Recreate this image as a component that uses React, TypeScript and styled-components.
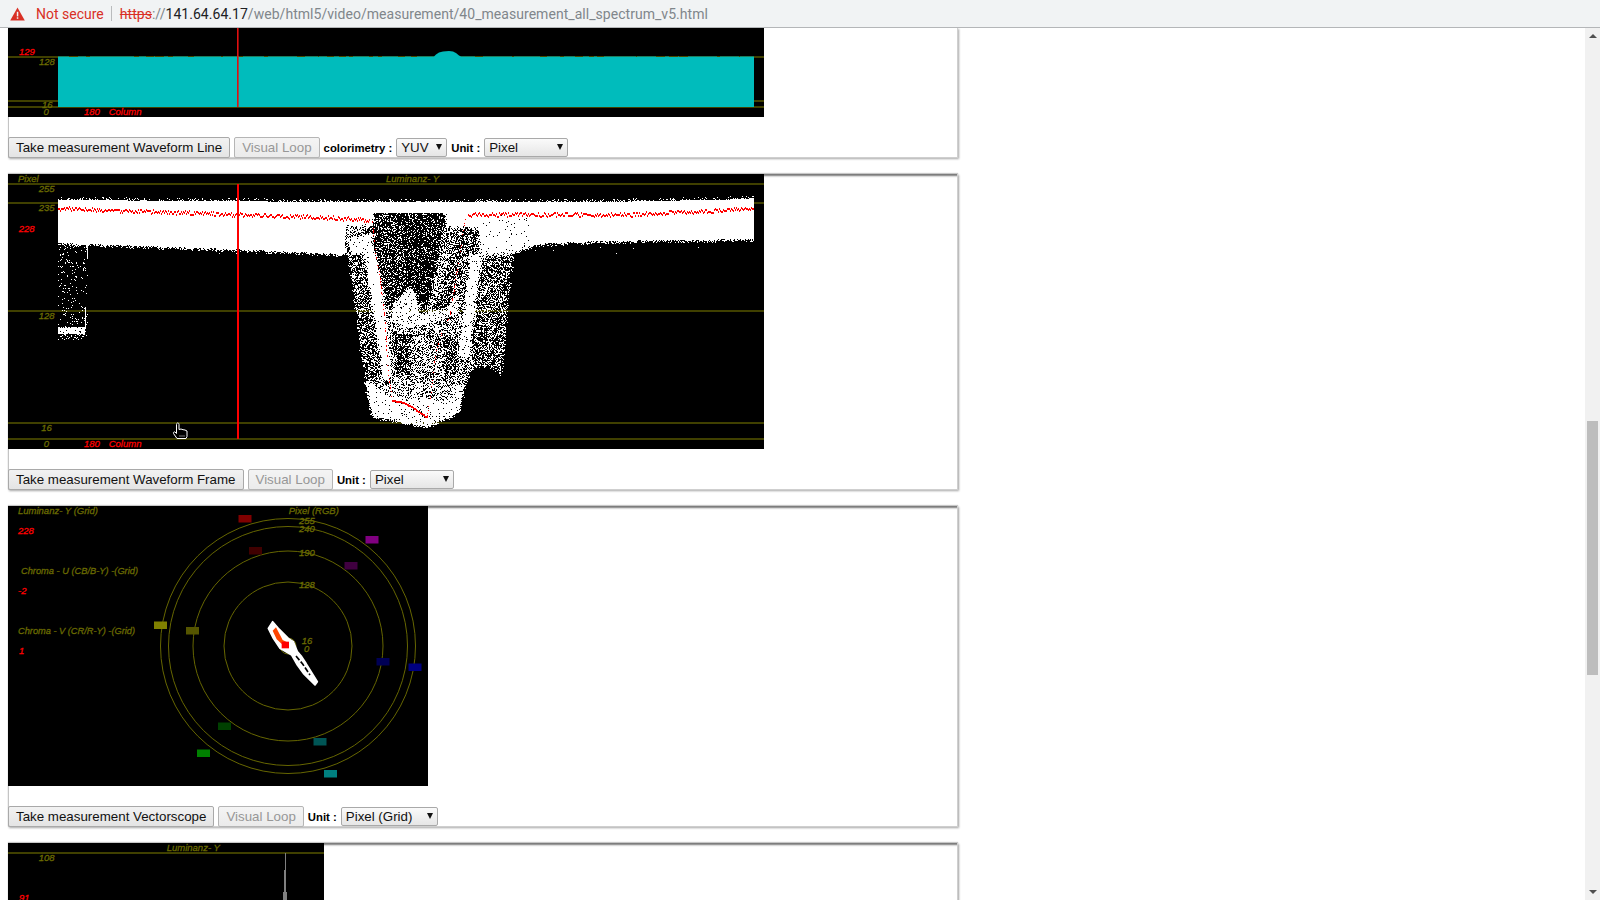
import React from 'react'
import styled, { createGlobalStyle } from 'styled-components'

type Pt = [number, number]
type Region = { d: number; pts: Pt[] }

function makeRandom(seed: number) {
  let s = seed
  return () => {
    s = (s * 1664525 + 1013904223) % 4294967296
    return s / 4294967296
  }
}

function lerp(stops: Pt[], x: number) {
  for (let i = 1; i < stops.length; i++) {
    if (x <= stops[i][0]) {
      const [x0, y0] = stops[i - 1]
      const [x1, y1] = stops[i]
      return y0 + ((y1 - y0) * (x - x0)) / (x1 - x0)
    }
  }
  return stops[stops.length - 1][1]
}

function inside(pts: Pt[], x: number, y: number) {
  let hit = false
  for (let i = 0, j = pts.length - 1; i < pts.length; j = i++) {
    const [xi, yi] = pts[i]
    const [xj, yj] = pts[j]
    if (yi > y !== yj > y && x < ((xj - xi) * (y - yi)) / (yj - yi) + xi) hit = !hit
  }
  return hit
}

// regions of the dip, in zoomed coordinates (x = 322 + zx / 3, y = -4 + zy / 3)
const dipRegions: Region[] = [
  { d: 0.45, pts: [[40, 170], [550, 170], [610, 222], [550, 250], [545, 300], [530, 430], [520, 560], [515, 612], [470, 585], [420, 600], [385, 730], [290, 772], [125, 740], [100, 600], [60, 300], [45, 250]] },
  { d: 0.42, pts: [[65, 250], [105, 250], [150, 620], [105, 620]] },
  { d: 0.4, pts: [[450, 260], [545, 258], [520, 560], [515, 612], [470, 585], [420, 570]] },
  { d: 0.62, pts: [[150, 430], [400, 430], [400, 640], [150, 640]] },
  { d: 0.28, pts: [[185, 490], [240, 490], [235, 610], [195, 600]] },
  { d: 0.34, pts: [[340, 500], [385, 500], [380, 610], [345, 610]] },
  { d: 0.17, pts: [[125, 125], [385, 125], [345, 175], [440, 178], [425, 270], [395, 370], [370, 420], [280, 415], [250, 360], [215, 375], [165, 415], [150, 340], [130, 240]] },
  { d: 0.28, pts: [[130, 140], [215, 140], [230, 330], [165, 400]] },
  { d: 0.42, pts: [[345, 178], [435, 178], [400, 380], [365, 400], [320, 390]] },
  { d: 0.62, pts: [[340, 175], [365, 175], [345, 300], [310, 420], [290, 420]] },
  { d: 1, pts: [[0, 110], [130, 110], [130, 165], [45, 165], [45, 250], [0, 250]] },
  { d: 0.55, pts: [[45, 165], [125, 165], [125, 205], [50, 210]] },
  { d: 0.95, pts: [[50, 205], [125, 190], [130, 250], [60, 250]] },
  { d: 1, pts: [[345, 110], [445, 110], [445, 172], [345, 172]] },
  { d: 0.97, pts: [[440, 110], [620, 110], [620, 225], [550, 250], [450, 255]] },
  { d: 0.98, pts: [[100, 245], [136, 245], [156, 340], [176, 520], [181, 630], [160, 630], [130, 440]] },
  { d: 0.9, pts: [[190, 395], [215, 375], [235, 345], [252, 365], [270, 430], [350, 415], [365, 385], [385, 370], [380, 425], [300, 460], [220, 470], [180, 450]] },
  { d: 0.95, pts: [[420, 250], [455, 250], [436, 400], [416, 560], [380, 560], [400, 420]] },
  { d: 0.95, pts: [[105, 640], [400, 640], [385, 730], [290, 772], [125, 740]] },
  { d: 0.72, pts: [[130, 640], [380, 640], [360, 690], [170, 680]] },
]

const dipRed: Pt[] = [[125, 150], [135, 240], [150, 330], [165, 460], [172, 590], [185, 690], [220, 695], [250, 712], [290, 740], [300, 680], [310, 590], [325, 510], [360, 430], [385, 270], [405, 140]]

function buildFrameTrace() {
  const rnd = makeRandom(41)
  const topAt: Pt[] = [[50, 26], [330, 28], [600, 28], [746, 25]]
  const bottomAt: Pt[] = [[50, 68], [222, 74], [337, 79], [525, 69], [590, 66], [746, 64]]
  const rows: boolean[][] = Array.from({ length: 275 }, () => new Array(756).fill(false))
  const set = (x: number, y: number) => {
    if (y >= 0 && y < 275 && x >= 0 && x < 756) rows[y][x] = true
  }

  // main band
  for (let x = 50; x < 746; x++) {
    const inDip = x >= 337 && x <= 520
    const top = Math.round(lerp(topAt, x))
    const bottom = inDip ? 38 : Math.round(lerp(bottomAt, x))
    for (let y = top; y <= bottom; y++) set(x, y)
    for (let k = 1; k < 4; k++) {
      if (rnd() < 0.35 / k) set(x, top - k)
      if (!inDip && rnd() < 0.7 / k) set(x, bottom + k)
    }
    if (!inDip && rnd() < 0.4) set(x, bottom - Math.floor(rnd() * 3))
  }

  // the dip, region edges get dithered by jittering the tested point
  for (let y = 34; y < 264; y++) {
    for (let x = 322; x < 545; x++) {
      const zx = (x - 322) * 3 + (rnd() - 0.5) * 10
      const zy = (y + 4) * 3 + (rnd() - 0.5) * 10
      let d = 0
      for (const r of dipRegions) {
        if (inside(r.pts, zx, zy)) d = r.d
      }
      if (d > 0 && rnd() < d) set(x, y)
    }
  }

  // left stub
  for (let y = 68; y < 166; y++) {
    for (let x = 50; x < 80; x++) {
      const lump = y >= 153 && y <= 159 && x < 77
      if (rnd() < (lump ? 0.9 : y > 159 ? 0.18 : 0.07)) set(x, y)
    }
  }
  for (let y = 70; y < 85; y++) set(79, y)
  for (let y = 133; y < 155; y++) set(77, y)

  // loose points
  for (let i = 0; i < 24; i++) set(120 + Math.floor(rnd() * 600), 72 + Math.floor(rnd() * 8))

  let white = ''
  rows.forEach((row, y) => {
    let x = 0
    while (x < 756) {
      if (!row[x]) {
        x++
        continue
      }
      let end = x
      while (end < 756 && row[end]) end++
      white += `M${x} ${y + 0.5}h${end - x}`
      x = end
    }
  })

  let red = ''
  const redLeft: Pt[] = [[50, 34], [322, 43], [362, 46]]
  for (let x = 50; x < 362; x++) {
    const y = Math.round(lerp(redLeft, x) + (rnd() - 0.5) * 4)
    red += `M${x} ${y}h1v2h-1z`
  }
  const redRight: Pt[] = [[460, 40], [620, 40], [746, 34]]
  for (let x = 460; x < 746; x++) {
    const y = Math.round(lerp(redRight, x) + (rnd() - 0.5) * 4)
    red += `M${x} ${y}h1v2h-1z`
  }
  for (let i = 1; i < dipRed.length; i++) {
    const [ax, ay] = dipRed[i - 1]
    const [bx, by] = dipRed[i]
    const steps = Math.ceil(Math.hypot(bx - ax, by - ay) / 3)
    const flat = i >= 6 && i <= 8
    for (let s = 0; s < steps; s++) {
      if (!flat && rnd() < 0.72) continue
      const x = 322 + (ax + ((bx - ax) * s) / steps) / 3
      const y = -4 + (ay + ((by - ay) * s) / steps) / 3
      red += `M${Math.round(x)} ${Math.round(y)}h1v${flat ? 2 : 1}h-1z`
    }
  }
  return { white, red }
}

function buildLineFringe() {
  const rnd = makeRandom(7)
  let d = ''
  let x = 52
  while (x < 740) {
    const w = 1 + Math.floor(rnd() * 9)
    if (rnd() < 0.45 && !(x > 420 && x < 456)) d += `M${x} 28.5h${w}`
    x += w + Math.floor(rnd() * 10)
  }
  return d
}

const frameTrace = buildFrameTrace()
const lineFringe = buildLineFringe()

const vectorBoxes: { x: number; y: number; color: string }[] = [
  { x: 230.5, y: 9, color: '#800000' },
  { x: 241, y: 41, color: '#400000' },
  { x: 357.5, y: 30, color: '#800080' },
  { x: 336.5, y: 56, color: '#400040' },
  { x: 146, y: 115.5, color: '#808000' },
  { x: 178, y: 121, color: '#555500' },
  { x: 368.5, y: 152, color: '#000055' },
  { x: 400.5, y: 157.5, color: '#000080' },
  { x: 210, y: 216.5, color: '#004000' },
  { x: 189, y: 243.5, color: '#008000' },
  { x: 305.5, y: 232, color: '#005555' },
  { x: 316, y: 264, color: '#008080' },
]

const GlobalStyle = createGlobalStyle`
  html, body {
    margin: 0;
    height: 100%;
    overflow: hidden;
    background: #fff;
  }
`

const Window = styled.div`
  width: 1600px;
  height: 900px;
  display: flex;
  flex-direction: column;
  overflow: hidden;
  font-family: "Liberation Sans", Arial, sans-serif;
`

const AddressBar = styled.header`
  height: 27px;
  flex: none;
  display: flex;
  align-items: center;
  padding-left: 10px;
  background: #f1f3f4;
  border-bottom: 1px solid #b4b6b8;
  font-family: Roboto, "Liberation Sans", sans-serif;
  font-size: 14px;
  white-space: nowrap;
`

const NotSecure = styled.span`
  margin-left: 11px;
  color: #d93025;
`

const Divider = styled.span`
  width: 1px;
  height: 15px;
  margin: 0 8px 0 7px;
  background: #b9bbbd;
`

const Url = styled.span`
  letter-spacing: 0.04px;
`

const UrlPart = styled.span<{ $tone: 'scheme' | 'sep' | 'host' | 'path' }>`
  color: ${p => ({ scheme: '#d93025', sep: '#80868b', host: '#202124', path: '#80868b' }[p.$tone])};
  text-decoration: ${p => (p.$tone === 'scheme' ? 'line-through' : 'none')};
`

const Body = styled.div`
  flex: 1;
  min-height: 0;
  display: flex;
`

const Page = styled.main`
  flex: 1;
  min-width: 0;
  overflow: hidden;
  padding-left: 8px;
`

const Panel = styled.section<{ $cut?: boolean }>`
  width: 950px;
  margin-bottom: 16px;
  background: #fff;
  box-shadow:
    inset 1px 0 0 #c4c4c4,
    inset -1px -1px 0 #cfcfcf,
    1px 1px 2px rgba(0, 0, 0, 0.35)
    ${p => (p.$cut ? '' : ', inset 0 3px 2px -1px #777, 0 -1px 1px rgba(0, 0, 0, 0.2)')};
`

const Scope = styled.svg`
  display: block;
  background: #000;
`

const ScopeText = styled.text<{ $red?: boolean }>`
  font-family: "Liberation Sans", Arial, sans-serif;
  font-size: 9.5px;
  font-style: italic;
  fill: ${p => (p.$red ? '#ff0000' : '#6b6b00')};
  stroke: ${p => (p.$red ? '#ff0000' : '#6b6b00')};
  stroke-width: 0.3px;
`

const GridLines = styled.path`
  fill: none;
  stroke: #808000;
  stroke-width: 1;
`

const Controls = styled.div`
  display: flex;
  align-items: center;
  gap: 4px;
  height: 21px;
  margin-top: 20px;
`

const Button = styled.button`
  height: 21px;
  padding: 0 7px;
  box-sizing: border-box;
  border: 1px solid #a9a9a9;
  border-radius: 2px;
  background: linear-gradient(#f2f2f2, #e4e4e4);
  color: #111;
  font-family: "Liberation Sans", Arial, sans-serif;
  font-size: 13.33px;
  white-space: nowrap;

  &:disabled {
    color: #979797;
    background: linear-gradient(#f4f4f4, #ebebeb);
    border-color: #b5b5b5;
  }
`

const Label = styled.label`
  font-size: 11.33px;
  font-weight: 700;
  color: #000;
  white-space: nowrap;
`

const SelectBox = styled.span`
  position: relative;
  display: block;

  &::after {
    content: '';
    position: absolute;
    top: 6px;
    right: 5px;
    border-style: solid;
    border-width: 6px 3.5px 0 3.5px;
    border-color: #111 transparent transparent transparent;
    pointer-events: none;
  }
`

const Select = styled.select<{ $width: number }>`
  display: block;
  appearance: none;
  width: ${p => p.$width}px;
  height: 19px;
  padding: 0 0 0 4px;
  box-sizing: border-box;
  border: 1px solid #a9a9a9;
  border-radius: 2px;
  background: linear-gradient(#fafafa, #e6e6e6);
  color: #111;
  font-family: "Liberation Sans", Arial, sans-serif;
  font-size: 13.33px;
`

const ScrollTrack = styled.aside`
  width: 15px;
  flex: none;
  position: relative;
  display: flex;
  flex-direction: column;
  align-items: center;
  justify-content: space-between;
  padding: 6px 0;
  box-sizing: border-box;
  background: #f1f1f1;
`

const ScrollThumb = styled.div`
  position: absolute;
  top: 393px;
  left: 2px;
  width: 11px;
  height: 254px;
  background: #bdbdbd;
`

const ScrollArrow = styled.span<{ $down?: boolean }>`
  width: 0;
  height: 0;
  border-style: solid;
  border-width: ${p => (p.$down ? '4px 4px 0 4px' : '0 4px 4px 4px')};
  border-color: ${p => (p.$down ? '#505050 transparent transparent' : 'transparent transparent #505050')};
`

function WarningIcon() {
  return (
    <svg width="15" height="14" viewBox="0 0 15 14">
      <path d="M7.5 0.5 L14.8 13.5 H0.2 Z" fill="#d93025" />
      <rect x="6.8" y="4.8" width="1.5" height="4.6" fill="#f1f3f4" />
      <rect x="6.8" y="10.3" width="1.5" height="1.5" fill="#f1f3f4" />
    </svg>
  )
}

function HandCursor() {
  return (
    <g transform="translate(165 249)" fill="#000" stroke="#fff" strokeWidth="1">
      <path d="M3.5 1.5 C3.5 -0.5 6 -0.5 6 1.5 V6.5 L8 6 L10 6.7 L12 7 L14 8 V13.5 L13 15.5 H4 L0.5 10.5 C0 9.5 1 8.5 2 9 L3.5 10.5 Z" />
      <path d="M7 12v2M9 12v2M11 12v2" stroke="#777" />
    </g>
  )
}

function LineScope() {
  return (
    <Scope width="756" height="89" viewBox="0 0 756 89">
      <GridLines d="M0 29H756M0 73H756M0 79H756" />
      <path
        d="M50 28.5H426L428 26.5L431 24.5L435 23.5L441 23L445 23.5L448 25L451 27.5L453 28.5H746V79H50Z"
        fill="#00bcbc"
      />
      <path d={lineFringe} stroke="#4b4a00" strokeWidth="1" shapeRendering="crispEdges" />
      <rect x="229" y="0" width="1.6" height="79" fill="#e01010" />
      <ScopeText $red x="11" y="26.5">129</ScopeText>
      <ScopeText x="31" y="36.5">128</ScopeText>
      <ScopeText x="34" y="80">16</ScopeText>
      <ScopeText x="35.5" y="86.5">0</ScopeText>
      <ScopeText $red x="76" y="86.5">180</ScopeText>
      <ScopeText $red x="100.7" y="86.5">Column</ScopeText>
    </Scope>
  )
}

function FrameScope() {
  return (
    <Scope width="756" height="275" viewBox="0 0 756 275">
      <GridLines d="M0 10H756M0 29H756M0 137H756M0 249H756M0 265H756" />
      <path d={frameTrace.white} stroke="#fff" strokeWidth="1" shapeRendering="crispEdges" />
      <path d={frameTrace.red} fill="#ff0000" shapeRendering="crispEdges" />
      <rect x="229" y="10" width="2" height="255" fill="#ff0000" />
      <HandCursor />
      <ScopeText x="10" y="8.2">Pixel</ScopeText>
      <ScopeText x="378" y="8.2">Luminanz- Y</ScopeText>
      <ScopeText x="30.7" y="18.2">255</ScopeText>
      <ScopeText x="30.7" y="37.2">235</ScopeText>
      <ScopeText $red x="10.7" y="58.2">228</ScopeText>
      <ScopeText x="30.7" y="145.2">128</ScopeText>
      <ScopeText x="33.3" y="257">16</ScopeText>
      <ScopeText x="35.7" y="273.2">0</ScopeText>
      <ScopeText $red x="76" y="273.2">180</ScopeText>
      <ScopeText $red x="100.7" y="273.2">Column</ScopeText>
    </Scope>
  )
}

function VectorScope() {
  return (
    <Scope width="420" height="280" viewBox="0 0 420 280">
      <g fill="none" stroke="#666600" strokeWidth="1">
        <circle cx="280" cy="140" r="127.5" />
        <circle cx="280" cy="140" r="119.5" />
        <circle cx="280" cy="140" r="95" />
        <circle cx="280" cy="140" r="64" />
        <circle cx="280" cy="140" r="8" />
      </g>
      {vectorBoxes.map(box => (
        <rect key={box.x} x={box.x} y={box.y} width="13" height="7.5" fill={box.color} />
      ))}
      <g transform="translate(252 104) scale(0.3333)">
        <path
          d="M25 55L38 35L55 55L85 85L100 95L112 125L125 140L138 160L172 215L165 225L130 190L112 165L95 135L60 115L40 85Z"
          fill="#fff"
          stroke="#fff"
          strokeWidth="5"
          strokeLinejoin="round"
        />
        <path d="M108 138L128 162L150 195" fill="none" stroke="#000" strokeWidth="5" strokeDasharray="16 6" />
        <path d="M38 62L48 52L68 90L80 96L72 108L50 88Z" fill="#ff4500" />
        <rect x="65" y="95" width="22" height="20" fill="#ff0000" />
      </g>
      <ScopeText x="10" y="8.2">Luminanz- Y (Grid)</ScopeText>
      <ScopeText x="280.7" y="8.2">Pixel (RGB)</ScopeText>
      <ScopeText $red x="10" y="28.2">228</ScopeText>
      <ScopeText x="13" y="68.2" textLength={117} lengthAdjust="spacingAndGlyphs">Chroma - U (CB/B-Y) -(Grid)</ScopeText>
      <ScopeText $red x="10" y="88.2">-2</ScopeText>
      <ScopeText x="10" y="128.2" textLength={117} lengthAdjust="spacingAndGlyphs">Chroma - V (CR/R-Y) -(Grid)</ScopeText>
      <ScopeText $red x="11" y="148.2">1</ScopeText>
      <ScopeText x="291" y="18.2">255</ScopeText>
      <ScopeText x="291" y="26.2">240</ScopeText>
      <ScopeText x="291" y="50.2">190</ScopeText>
      <ScopeText x="291" y="81.8">128</ScopeText>
      <ScopeText x="293.7" y="138.2">16</ScopeText>
      <ScopeText x="296" y="146.2">0</ScopeText>
    </Scope>
  )
}

function HistogramScope() {
  return (
    <Scope width="316" height="275" viewBox="0 0 316 275">
      <GridLines d="M0 10H316" />
      <path d="M277 10h1V49h1V275h-4V49h1V27h1Z" fill="#808080" />
      <ScopeText x="158.7" y="8">Luminanz- Y</ScopeText>
      <ScopeText x="30.7" y="18">108</ScopeText>
      <ScopeText $red x="11" y="57.5">91</ScopeText>
    </Scope>
  )
}

function Dropdown({ width, value }: { width: number; value: string }) {
  return (
    <SelectBox>
      <Select $width={width} defaultValue={value}>
        <option>{value}</option>
      </Select>
    </SelectBox>
  )
}

export default function App() {
  return (
    <Window>
      <GlobalStyle />
      <AddressBar>
        <WarningIcon />
        <NotSecure>Not secure</NotSecure>
        <Divider />
        <Url>
          <UrlPart $tone="scheme">https</UrlPart>
          <UrlPart $tone="sep">://</UrlPart>
          <UrlPart $tone="host">141.64.64.17</UrlPart>
          <UrlPart $tone="path">/web/html5/video/measurement/40_measurement_all_spectrum_v5.html</UrlPart>
        </Url>
      </AddressBar>
      <Body>
        <Page>
          <Panel $cut>
            <LineScope />
            <Controls>
              <Button>Take measurement Waveform Line</Button>
              <Button disabled>Visual Loop</Button>
              <Label>colorimetry :</Label>
              <Dropdown width={51} value="YUV" />
              <Label>Unit :</Label>
              <Dropdown width={84} value="Pixel" />
            </Controls>
          </Panel>
          <Panel>
            <FrameScope />
            <Controls>
              <Button>Take measurement Waveform Frame</Button>
              <Button disabled>Visual Loop</Button>
              <Label>Unit :</Label>
              <Dropdown width={84} value="Pixel" />
            </Controls>
          </Panel>
          <Panel>
            <VectorScope />
            <Controls>
              <Button>Take measurement Vectorscope</Button>
              <Button disabled>Visual Loop</Button>
              <Label>Unit :</Label>
              <Dropdown width={97} value="Pixel (Grid)" />
            </Controls>
          </Panel>
          <Panel>
            <HistogramScope />
          </Panel>
        </Page>
        <ScrollTrack>
          <ScrollArrow />
          <ScrollThumb />
          <ScrollArrow $down />
        </ScrollTrack>
      </Body>
    </Window>
  )
}
